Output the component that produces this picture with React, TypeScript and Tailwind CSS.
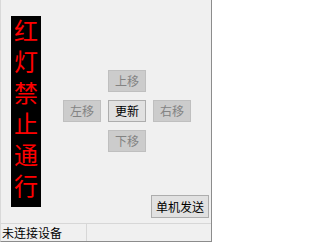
const FONT = '"Noto Sans CJK SC", "Liberation Sans", sans-serif';
const SIGN_FONT = '"Liberation Sans", "Noto Sans CJK SC", sans-serif';

const moves = [
  { label: '', hidden: true },
  { label: '上移', disabled: true },
  { label: '', hidden: true },
  { label: '左移', disabled: true },
  { label: '更新', disabled: false },
  { label: '右移', disabled: true },
  { label: '', hidden: true },
  { label: '下移', disabled: true },
  { label: '', hidden: true },
];

function WinButton({ label, disabled }: { label: string; disabled?: boolean }) {
  return (
    <button
      disabled={disabled}
      className={
        disabled
          ? 'w-[38px] h-[22px] border border-[#bfbfbf] bg-[#cccccc] text-[#838383] text-[12px] leading-none'
          : 'w-[38px] h-[22px] border border-[#adadad] bg-[#e1e1e1] text-black text-[12px] leading-none'
      }
      style={{ fontFamily: FONT }}
    >
      {label}
    </button>
  );
}

export default function App() {
  const sign = ['红', '灯', '禁', '止', '通', '行'];

  return (
    <div
      className="w-[212px] h-[242px] flex flex-col bg-[#f0f0f0] border-l border-[#d9d9d9] border-r border-b border-r-[#8c8c8c] border-b-[#8c8c8c]"
      style={{ fontFamily: FONT }}
    >
      {/* main area */}
      <div className="flex flex-1 min-h-0">
        <div
          className="ml-[10px] mt-[16px] w-[30px] h-[191px] bg-black flex flex-col items-center"
          style={{ fontFamily: SIGN_FONT }}
        >
          {sign.map((c) => (
            <span key={c} className="text-[#ff0000] text-[24px] leading-[31px]">
              {c}
            </span>
          ))}
        </div>

        <div className="flex-1 flex flex-col">
          <div className="pl-[22px] pt-[70px] grid grid-cols-[38px_38px_38px] gap-x-[7px] gap-y-[8px]">
            {moves.map((m, i) =>
              m.hidden ? (
                <div key={i} className="h-[22px]" />
              ) : (
                <WinButton key={i} label={m.label} disabled={m.disabled} />
              )
            )}
          </div>

          <button className="mt-auto self-end mr-[2px] mb-[5px] w-[58px] h-[23px] border border-[#adadad] bg-[#e1e1e1] text-black text-[12px] leading-none">
            单机发送
          </button>
        </div>
      </div>

      {/* status bar */}
      <div className="h-[18px] border-t border-[#d7d7d7] flex items-stretch">
        <div className="w-[86px] border-r border-[#d7d7d7] pl-[1px] flex items-center text-[12px] text-black leading-none">
          未连接设备
        </div>
        <div className="flex-1" />
      </div>
    </div>
  );
}
